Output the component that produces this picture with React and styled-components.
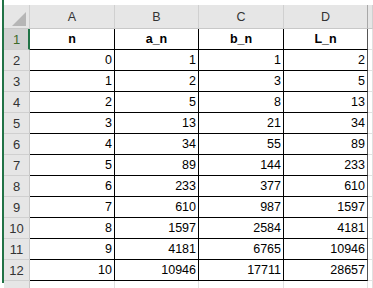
import React from "react";
import styled, { createGlobalStyle } from "styled-components";

const Global = createGlobalStyle`
  html, body { margin: 0; padding: 0; background: #fff; }
  body { font-family: "Liberation Sans", Arial, sans-serif; }
`;

const Frame = styled.div`
  width: 373px;
  height: 288px;
  overflow: hidden;
  box-sizing: border-box;
  padding: 5px 0 0 2px;
  background: #fff;
`;

const Sheet = styled.div`
  display: grid;
  grid-template-columns: 26px 85px 84px 85px 84px 1fr;
  grid-auto-rows: 21px;
  grid-template-rows: 24px;
  border-left: 2px solid #217346;
  height: 100%;
  box-sizing: border-box;
  margin-top: -5px;
  padding-top: 5px;
`;

const Corner = styled.div`
  background: #e6e6e6;
  border-right: 1px solid #d0d0d0;
  border-bottom: 1px solid #c8c8c8;
  position: relative;
  box-sizing: border-box;
`;

const Triangle = styled.svg`
  position: absolute;
  right: 3px;
  bottom: 2px;
`;

const ColHeader = styled.div`
  background: #e6e6e6;
  border-right: 1px solid ${(p) => (p.$last ? "#a8a8a8" : "#d0d0d0")};
  border-bottom: 1px solid #c8c8c8;
  box-sizing: border-box;
  display: flex;
  align-items: center;
  justify-content: center;
  font-size: 12.5px;
  color: #333;
  padding-top: 1px;
`;

const RowHeader = styled.div`
  background: ${(p) => (p.$selected ? "#d2d2d2" : "#e6e6e6")};
  border-right: ${(p) => (p.$selected ? "2px solid #217346" : "1px solid #c8c8c8")};
  border-bottom: 1px solid #d0d0d0;
  box-sizing: border-box;
  display: flex;
  align-items: center;
  justify-content: center;
  font-size: 13px;
  color: ${(p) => (p.$selected ? "#3d6b2a" : "#333")};
  padding-left: ${(p) => (p.$selected ? "1px" : "0")};
`;

const Cell = styled.div`
  box-sizing: border-box;
  border-right: 1px solid ${(p) => (p.$edge ? "#555" : "#000")};
  border-bottom: 1px solid #000;
  display: flex;
  align-items: flex-end;
  justify-content: ${(p) => (p.$head ? "center" : "flex-end")};
  font-weight: ${(p) => (p.$head ? 700 : 400)};
  font-size: 12.5px;
  color: #000;
  padding: 0 2px 3px 2px;
  white-space: nowrap;
`;

const Blank = styled.div`
  box-sizing: border-box;
  border-right: 1px solid #e0e0e0;
  border-bottom: 1px solid #e0e0e0;
`;

const cols = ["A", "B", "C", "D"];
const heads = ["n", "a_n", "b_n", "L_n"];
const a = [1, 2, 5, 13, 34, 89, 233, 610, 1597, 4181, 10946];
const b = [1, 3, 8, 21, 55, 144, 377, 987, 2584, 6765, 17711];
const L = [2, 5, 13, 34, 89, 233, 610, 1597, 4181, 10946, 28657];
const rows = a.map((_, i) => [i, a[i], b[i], L[i]]);

export default function App() {
  return (
    <>
      <Global />
      <Frame>
        <Sheet>
          <Corner>
            <Triangle width="14" height="14" viewBox="0 0 14 14">
              <polygon points="14,0 14,14 0,14" fill="#b6b6b6" />
            </Triangle>
          </Corner>
          {cols.map((c, i) => (
            <ColHeader key={c} $last={i === 3}>
              {c}
            </ColHeader>
          ))}
          <ColHeader />

          <RowHeader $selected>1</RowHeader>
          {heads.map((h, i) => (
            <Cell key={h} $head $edge={i === 3}>
              {h}
            </Cell>
          ))}
          <Blank />

          {rows.map((r, ri) => (
            <React.Fragment key={ri}>
              <RowHeader>{ri + 2}</RowHeader>
              {r.map((v, ci) => (
                <Cell key={ci} $edge={ci === 3}>
                  {v}
                </Cell>
              ))}
              <Blank />
            </React.Fragment>
          ))}

          <RowHeader />
          <Blank />
          <Blank />
          <Blank />
          <Blank />
          <Blank />
        </Sheet>
      </Frame>
    </>
  );
}
